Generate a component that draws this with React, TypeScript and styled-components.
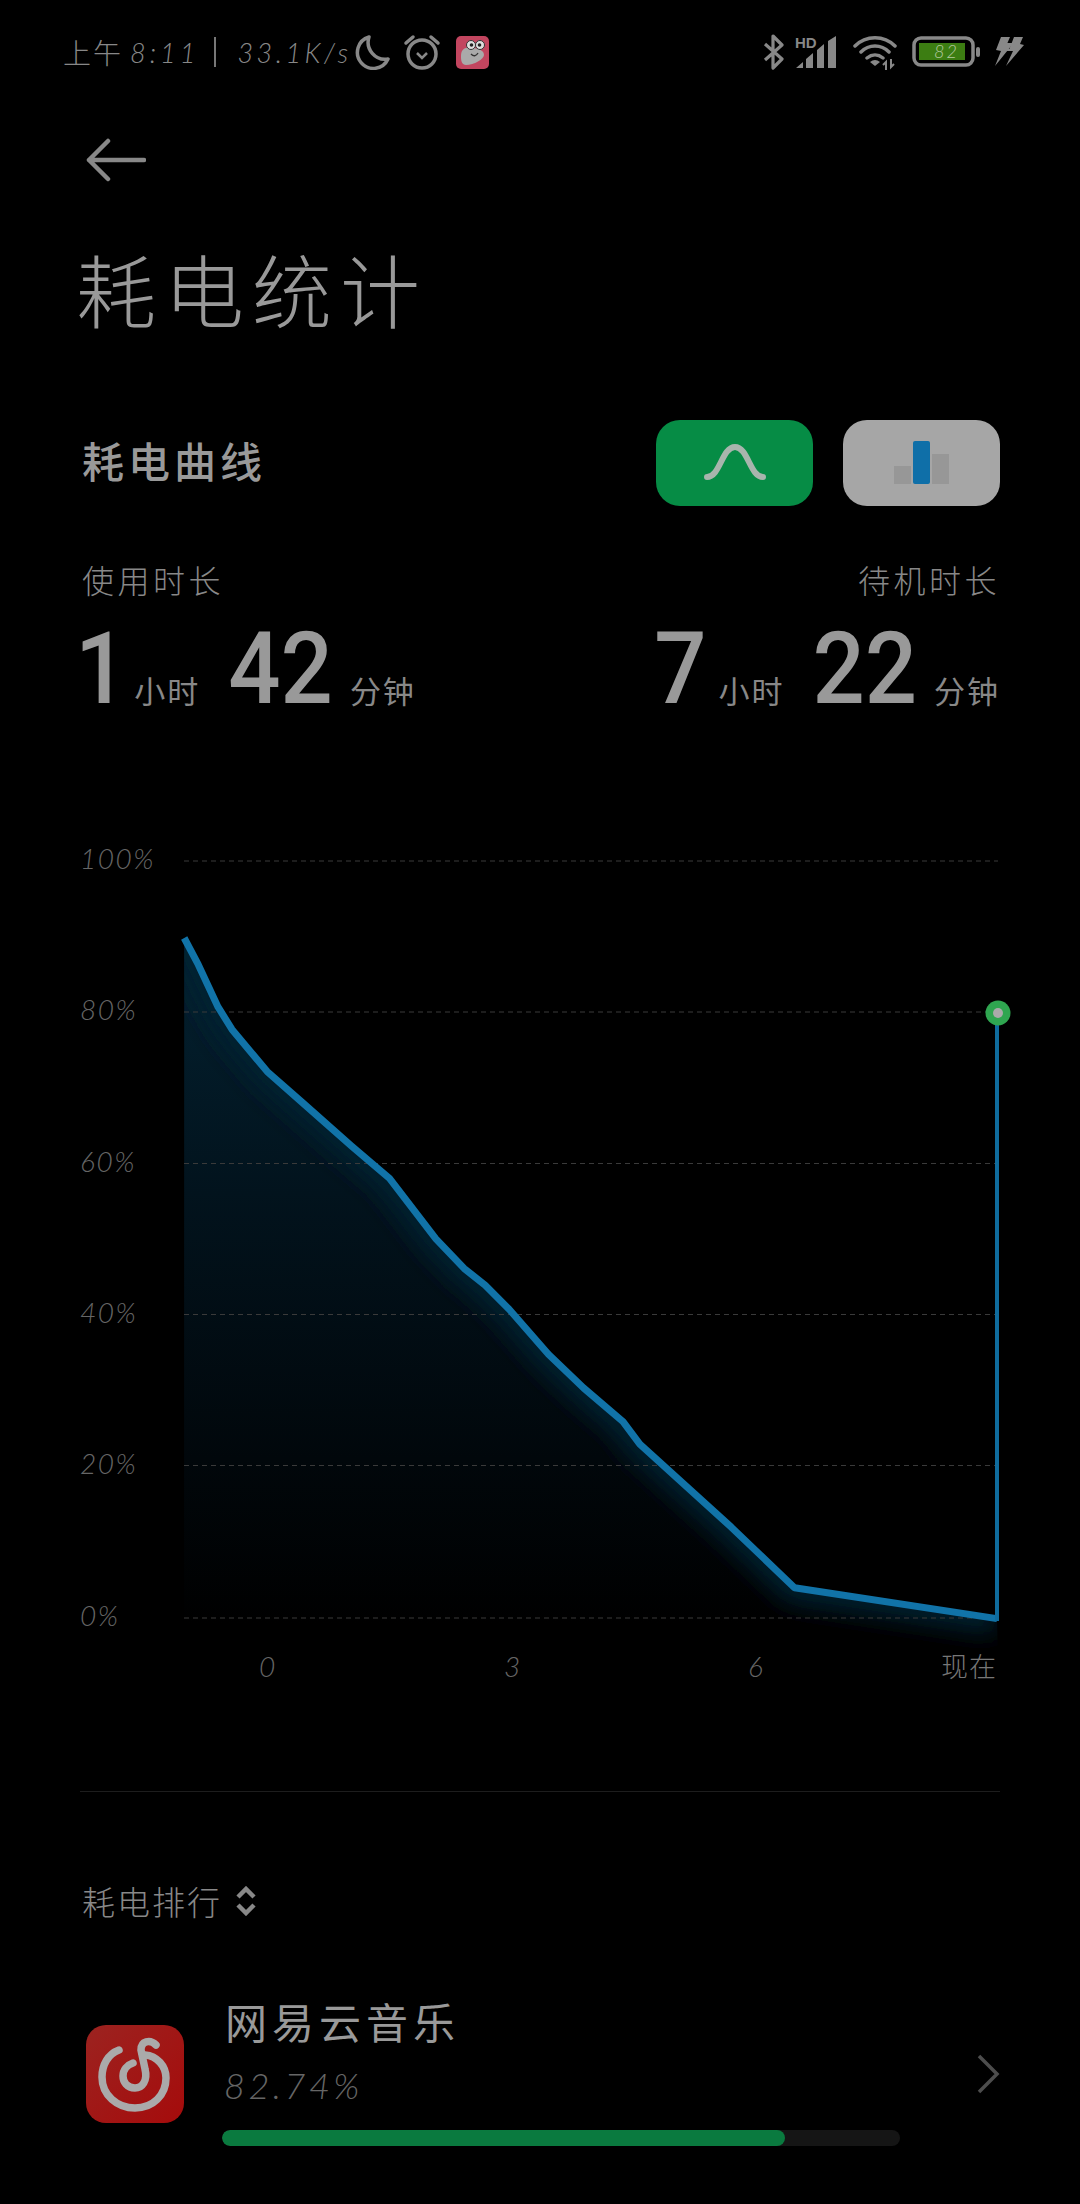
import React from "react";
import styled, { createGlobalStyle } from "styled-components";

const cjk = `"Noto Sans CJK SC", "Noto Sans", sans-serif`;
const latin = `Lato, "Noto Sans CJK SC", sans-serif`;

const Global = createGlobalStyle`
  html, body { margin: 0; padding: 0; background: #000; }
  * { box-sizing: border-box; }
`;

const Page = styled.div`
  width: 1080px;
  height: 2204px;
  background: #000;
  overflow: hidden;
  font-family: ${cjk};
  color: #999;
  display: flex;
  flex-direction: column;
`;

const StatusBar = styled.div`
  height: 104px;
  padding: 0 56px 0 63px;
  display: flex;
  align-items: center;
  justify-content: space-between;
`;

const StatusGroup = styled.div`
  display: flex;
  align-items: center;
`;

const ClockCjk = styled.span`
  font-size: 28px;
  font-weight: 300;
  letter-spacing: 2px;
  color: #888;
  line-height: 1;
`;

const ClockTime = styled.span`
  font-family: ${latin};
  font-style: italic;
  font-weight: 300;
  font-size: 27px;
  letter-spacing: 4px;
  color: #888;
  line-height: 1;
  margin: 0 15px 0 7px;
  white-space: nowrap;
`;

const Speed = styled.span`
  font-family: ${latin};
  font-style: italic;
  font-weight: 300;
  font-size: 27px;
  letter-spacing: 3.5px;
  color: #888;
  line-height: 1;
  white-space: nowrap;
`;

const StatusDivider = styled.span`
  width: 2px;
  height: 30px;
  margin-right: 21px;
  background: #777;
`;

const StatusIcon = styled.svg<{ $left: number }>`
  display: block;
  flex: none;
  margin-left: ${(p) => p.$left}px;
`;

const BackRow = styled.div`
  height: 112px;
  padding-left: 86px;
  display: flex;
  align-items: center;
`;

const Title = styled.h1`
  margin: 16px 0 0 76px;
  font-size: 80px;
  line-height: 110px;
  font-weight: 300;
  letter-spacing: 8px;
  color: #999;
`;

const CurveRow = styled.div`
  margin-top: 78px;
  padding: 0 80px 0 82px;
  height: 86px;
  display: flex;
  align-items: center;
  justify-content: space-between;
`;

const SectionTitle = styled.h2`
  margin: 0;
  padding-bottom: 8px;
  font-size: 42px;
  font-weight: 500;
  letter-spacing: 4px;
  color: #999;
`;

const ToggleGroup = styled.div`
  display: flex;
  gap: 30px;
`;

const Toggle = styled.div<{ $bg: string }>`
  width: 157px;
  height: 86px;
  border-radius: 24px;
  background: ${(p) => p.$bg};
  display: flex;
  align-items: center;
  justify-content: center;
`;

const Stats = styled.div`
  margin-top: 51px;
  padding: 0 80px 0 82px;
  display: flex;
  justify-content: space-between;
`;

const StatCol = styled.div<{ $right?: boolean }>`
  display: flex;
  flex-direction: column;
  align-items: ${(p) => (p.$right ? "flex-end" : "flex-start")};
`;

const StatLabel = styled.div`
  font-size: 32px;
  line-height: 44px;
  font-weight: 300;
  letter-spacing: 3.5px;
  color: #888;
`;

const StatValue = styled.div`
  margin-top: 15px;
  display: flex;
  align-items: baseline;
  height: 112px;
`;

const Num = styled.span<{ $one?: boolean }>`
  display: inline-block;
  font-family: Roboto, sans-serif;
  font-weight: 500;
  font-size: 92px;
  line-height: 112px;
  color: #999;
  transform: scaleY(1.08);
  transform-origin: 0 78%;
  margin: ${(p) => (p.$one ? "0 -10px 0 -7px" : "0")};
`;

const Unit = styled.span<{ $last?: boolean; $lead?: number }>`
  font-size: 31px;
  font-weight: 400;
  color: #888;
  margin: 0 ${(p) => (p.$last ? 0 : 28)}px 0 ${(p) => p.$lead ?? 17}px;
  letter-spacing: 2px;
`;

const ChartSvg = styled.svg`
  display: block;
  margin-top: 112px;
  width: 1080px;
  height: 860px;
  flex: none;
`;

const AxisText = styled.text`
  font-family: ${latin};
  font-style: italic;
  font-weight: 300;
  font-size: 28px;
  fill: #666;
  letter-spacing: 1.5px;
`;

const AxisCjk = styled.text`
  font-family: ${cjk};
  font-weight: 300;
  font-size: 27px;
  letter-spacing: 1px;
  fill: #777;
`;

const Divider = styled.div`
  margin: 91px 80px 0;
  height: 1px;
  background: #1d1d1d;
`;

const RankHeader = styled.div`
  margin-top: 87px;
  padding-left: 82px;
  display: flex;
  align-items: center;
  gap: 13px;
  height: 44px;
`;

const RankLabel = styled.span`
  font-size: 33px;
  font-weight: 300;
  letter-spacing: 2px;
  color: #888;
`;

const AppRow = styled.div`
  margin-top: 70px;
  padding: 0 0 0 86px;
  display: flex;
  align-items: flex-start;
`;

const AppIcon = styled.div`
  width: 98px;
  height: 98px;
  margin-top: 32px;
  border-radius: 20px;
  background: linear-gradient(135deg, #9c2320, #a50b0b);
  display: flex;
  align-items: center;
  justify-content: center;
  flex: none;
`;

const AppBody = styled.div`
  margin-left: 38px;
  padding-top: 2px;
  width: 678px;
  display: flex;
  flex-direction: column;
`;

const AppName = styled.div`
  font-size: 42px;
  line-height: 52px;
  font-weight: 400;
  letter-spacing: 5px;
  margin-left: 3px;
  color: #999;
`;

const AppPct = styled.div`
  font-family: ${latin};
  font-style: italic;
  font-weight: 300;
  font-size: 36px;
  line-height: 44px;
  letter-spacing: 3.5px;
  margin: 16px 0 0 2px;
  color: #666;
`;

const Track = styled.div`
  margin-top: 23px;
  height: 16px;
  border-radius: 8px;
  background: #151515;
  overflow: hidden;
`;

const Fill = styled.div`
  height: 100%;
  border-radius: 8px;
  background: #0a7a3f;
`;

const ChevronWrap = styled.div`
  margin: 61px 0 0 76px;
  display: flex;
`;

const pts: [number, number][] = [
  [131, 667], [141, 686], [155, 716], [165, 732], [190, 762], [215, 784], [250, 815], [277, 838],
  [310, 881], [330, 902], [345, 914], [362, 931], [390, 963], [415, 987], [443, 1011], [455, 1027],
  [520, 1086], [565, 1129], [709, 1151],
];
const linePts = pts.map(([x, y]) => `${(x * 1.40625).toFixed(1)},${(y * 1.40625).toFixed(1)}`).join(" ");
const areaPts = `${linePts} 998,1660 184,1660`;
const gridYs = [861, 1012, 1163.5, 1314.5, 1465.5, 1618];
const yLabels = ["100%", "80%", "60%", "40%", "20%", "0%"];

export default function App() {
  return (
    <Page>
      <Global />
      <StatusBar>
        <StatusGroup>
          <ClockCjk>上午</ClockCjk>
          <ClockTime>8:11</ClockTime>
          <StatusDivider />
          <Speed>33.1K/s</Speed>
          <StatusIcon $left={3} width="36" height="36" viewBox="0 0 36 36">
            <path d="M14 3 A16 16 0 1 0 33 25 A17 17 0 0 1 14 3Z" fill="none" stroke="#888" strokeWidth="3.5" strokeLinejoin="round" />
          </StatusIcon>
          <StatusIcon $left={12} width="38" height="36" viewBox="0 0 38 36">
            <circle cx="19" cy="20" r="14" fill="none" stroke="#888" strokeWidth="3.5" />
            <path d="M14 19 L19 24 L24 19" fill="none" stroke="#888" strokeWidth="2.5" />
            <path d="M3 9 L10 3 M35 9 L28 3" stroke="#888" strokeWidth="3.5" strokeLinecap="round" />
          </StatusIcon>
          <StatusIcon $left={15} width="33" height="33" viewBox="0 0 33 33">
            <rect width="33" height="33" rx="5" fill="#c2455f" />
            <path d="M6 15 C8 11 13 11 18 12 C24 13 28 15 28 19 C28 23 18 29 10 29 C6 29 5 25 5 21 C5 19 5 17 6 15Z" fill="#aaa" />
            <circle cx="15" cy="9" r="4.5" fill="#ddd" stroke="#333" strokeWidth="1" />
            <circle cx="24" cy="9" r="4.5" fill="#ddd" stroke="#333" strokeWidth="1" />
            <circle cx="15.5" cy="9" r="1.8" fill="#222" />
            <circle cx="23.5" cy="9" r="1.8" fill="#222" />
            <path d="M15 18 Q19 22 22 17" fill="none" stroke="#333" strokeWidth="1.4" />
          </StatusIcon>
        </StatusGroup>
        <StatusGroup>
          <StatusIcon $left={0} width="24" height="36" viewBox="0 0 24 36">
            <path d="M3 10 L20 25 L11 34 L11 2 L20 11 L3 26" fill="none" stroke="#888" strokeWidth="3.2" strokeLinejoin="round" />
          </StatusIcon>
          <StatusIcon $left={8} width="44" height="34" viewBox="0 0 44 34">
            <text x="1" y="13" fontFamily="Liberation Sans" fontWeight="700" fontSize="15" fill="#888">HD</text>
            <path d="M2 33 L9 27 L9 33Z M12 33 L12 24 L19 18 L19 33Z M23 33 L23 15 L30 9 L30 33Z M34 33 L34 6 L42 1 L42 33Z" fill="#888" />
          </StatusIcon>
          <StatusIcon $left={15} width="46" height="36" viewBox="0 0 46 36">
            <path d="M2 12 C13 1 31 1 42 12 M8 18 C16 10 28 10 36 18 M14 24 C19 20 25 20 30 24" fill="none" stroke="#888" strokeWidth="3.5" strokeLinecap="round" />
            <path d="M17 28 Q22 24 27 28 L22 32Z" fill="#888" />
            <path d="M33 36 L33 28 L30 31 M38 25 L38 33 L41 30" fill="none" stroke="#888" strokeWidth="2" />
          </StatusIcon>
          <StatusIcon $left={13} width="70" height="32" viewBox="0 0 70 32">
            <rect x="2" y="2" width="59" height="27" rx="7" fill="none" stroke="#888" strokeWidth="3.5" />
            <rect x="7" y="7" width="46" height="17" fill="#3c7d12" />
            <rect x="64" y="11" width="4" height="10" rx="2" fill="#888" />
            <text x="22" y="22" fontFamily="Lato" fontStyle="italic" fontWeight="300" fontSize="18" letterSpacing="2" fill="#b5c9a0">82</text>
          </StatusIcon>
          <StatusIcon $left={12} width="30" height="32" viewBox="0 0 30 32">
            <path d="M7 1 L16 1 L13 8 L18 9 L1 30 L7 15 L2 14Z" fill="#888" />
            <path d="M20 1 L29 1 L26 8 L30 9 L12 30 L19 15 L15 14Z" fill="#888" />
            <path d="M10 8 L24 8 M8 14 L22 14" stroke="#888" strokeWidth="2" />
          </StatusIcon>
        </StatusGroup>
      </StatusBar>

      <BackRow>
        <svg width="60" height="44" viewBox="0 0 60 44">
          <path d="M58 22 L3 22 M22 3 L3 22 L22 41" fill="none" stroke="#888" strokeWidth="4.5" strokeLinecap="round" strokeLinejoin="round" />
        </svg>
      </BackRow>

      <Title>耗电统计</Title>

      <CurveRow>
        <SectionTitle>耗电曲线</SectionTitle>
        <ToggleGroup>
          <Toggle $bg="#068c45">
            <svg width="62" height="38" viewBox="0 0 62 38">
              <path d="M3 33 C16 33 18 3 31 3 C44 3 46 33 59 33" fill="none" stroke="#a8b5ad" strokeWidth="6" strokeLinecap="round" />
            </svg>
          </Toggle>
          <Toggle $bg="#a6a6a6">
            <svg width="56" height="44" viewBox="0 0 56 44">
              <rect x="0" y="25" width="17" height="18" fill="#979797" />
              <rect x="19" y="0" width="17" height="43" rx="2" fill="#0f6fa8" />
              <rect x="38" y="13" width="17" height="30" fill="#979797" />
            </svg>
          </Toggle>
        </ToggleGroup>
      </CurveRow>

      <Stats>
        <StatCol>
          <StatLabel>使用时长</StatLabel>
          <StatValue>
            <Num $one>1</Num><Unit>小时</Unit>
            <Num>42</Num><Unit $last>分钟</Unit>
          </StatValue>
        </StatCol>
        <StatCol $right>
          <StatLabel>待机时长</StatLabel>
          <StatValue>
            <Num>7</Num><Unit $lead={12}>小时</Unit>
            <Num>22</Num><Unit $last>分钟</Unit>
          </StatValue>
        </StatCol>
      </Stats>

      <ChartSvg viewBox="0 840 1080 860">
        <defs>
          <linearGradient id="area" gradientUnits="userSpaceOnUse" x1="0" y1="960" x2="0" y2="1625">
            <stop offset="0" stopColor="#03202f" />
            <stop offset="0.35" stopColor="#02131d" />
            <stop offset="0.75" stopColor="#01070b" />
            <stop offset="1" stopColor="#000" />
          </linearGradient>
          <clipPath id="under">
            <polygon points={areaPts} />
          </clipPath>
          <filter id="soft" x="-10%" y="-10%" width="120%" height="120%">
            <feGaussianBlur stdDeviation="12" />
          </filter>
        </defs>
        <polygon points={areaPts} fill="url(#area)" />
        <g clipPath="url(#under)">
          <polyline points={linePts} fill="none" stroke="#052030" strokeWidth="30" filter="url(#soft)" />
        </g>
        {gridYs.map((y) => (
          <line key={y} x1="184" x2="998" y1={y} y2={y} stroke="#3a3a3a" strokeWidth="1" strokeDasharray="5 4" />
        ))}
        {yLabels.map((l, i) => (
          <AxisText key={l} x="80" y={gridYs[i] + 8}>{l}</AxisText>
        ))}
        <polyline points={linePts} fill="none" stroke="#1173a8" strokeWidth="7" strokeLinejoin="round" />
        <line x1="997" x2="997" y1="1013" y2="1621" stroke="#0f6c9e" strokeWidth="4" />
        <circle cx="998" cy="1013" r="12.5" fill="#2fa650" />
        <circle cx="998" cy="1013" r="5" fill="#aaa" />
        <AxisText x="259" y="1677">0</AxisText>
        <AxisText x="504" y="1677">3</AxisText>
        <AxisText x="748" y="1677">6</AxisText>
        <AxisCjk x="941" y="1677">现在</AxisCjk>
      </ChartSvg>

      <Divider />

      <RankHeader>
        <RankLabel>耗电排行</RankLabel>
        <svg width="22" height="30" viewBox="0 0 22 30">
          <path d="M3 11 L11 3 L19 11 M3 19 L11 27 L19 19" fill="none" stroke="#888" strokeWidth="4.5" />
        </svg>
      </RankHeader>

      <AppRow>
        <AppIcon>
          <svg width="98" height="98" viewBox="0 0 98 98">
            <path d="M33 25 C22 29 16 40 16 52 C16 70 31 83 49 83 C67 83 80 70 80 53 C80 41 71 31 59 30" fill="none" stroke="#aaa" strokeWidth="7.5" strokeLinecap="round" />
            <path d="M70 20 C64 14 55 16 55 25 L59 44 C62 56 56 63 49 63 C41 63 37 57 37 51 C37 45 41 40 47 38" fill="none" stroke="#aaa" strokeWidth="7.5" strokeLinecap="round" />
          </svg>
        </AppIcon>
        <AppBody>
          <AppName>网易云音乐</AppName>
          <AppPct>82.74%</AppPct>
          <Track>
            <Fill style={{ width: `${(563 / 678) * 100}%` }} />
          </Track>
        </AppBody>
        <ChevronWrap>
          <svg width="24" height="40" viewBox="0 0 24 40">
            <path d="M3 2 L21 20 L3 38" fill="none" stroke="#4d4d4d" strokeWidth="3.5" />
          </svg>
        </ChevronWrap>
      </AppRow>
    </Page>
  );
}
